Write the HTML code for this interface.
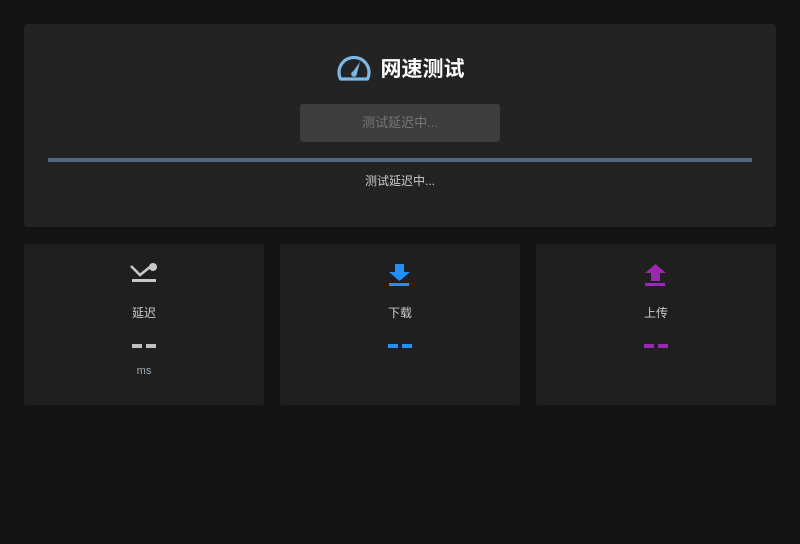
<!DOCTYPE html>
<html><head><meta charset="utf-8"><style>
*{margin:0;padding:0;box-sizing:border-box}
body{width:800px;height:544px;background:#141414;font-family:"Liberation Sans","Noto Sans CJK SC",sans-serif;position:relative;overflow:hidden}
.top{position:absolute;left:24px;top:24px;width:752px;height:203px;background:#232323;border-radius:4px}
.title{position:absolute;left:0;right:0;top:29px;color:#fff;font-size:21px;font-weight:bold;display:flex;justify-content:center;align-items:center;gap:9px}
.btn{position:absolute;left:300px;top:104px;width:200px;height:38px;background:#3d3d3d;border-radius:3px;color:#777;font-size:13px;text-align:center;line-height:38px}
.bar{position:absolute;left:48px;top:158px;width:704px;height:4px;background:#4c6882}
.st{position:absolute;left:0;right:0;top:172px;text-align:center;color:#ccc;font-size:12px}
.card{position:absolute;top:244px;width:240px;height:161px;background:#1f1f1f;border-radius:3px;text-align:center}
.card svg{position:absolute;left:106px;top:19px}
.lbl{position:absolute;left:0;right:0;top:60px;font-size:12px;color:#ccc}
.dash{position:absolute;left:108px;top:100px;width:24px;height:4px}
.dash:before,.dash:after{content:"";position:absolute;top:0;width:10px;height:4px;background:currentColor}
.dash:before{left:0}.dash:after{right:0}
.ms{position:absolute;left:0;right:0;top:121px;font-size:11px;color:#9ab}
</style></head><body>
<div class="top">
<div class="title"><svg width="36" height="28" viewBox="0 0 36 28"><path d="M4.5 25A15 15 0 1 1 31.5 25Z" fill="none" stroke="#7ab8e8" stroke-width="3.2" stroke-linejoin="round"/><path d="M16 19L24 8L20.5 21Z" fill="#7ab8e8"/><circle cx="18" cy="20" r="2.8" fill="#7ab8e8"/></svg><span>网速测试</span></div>
</div>
<div class="btn">测试延迟中...</div>
<div class="bar"></div>
<div class="st">测试延迟中...</div>
<div class="card" style="left:24px"><svg width="30" height="24" viewBox="0 0 30 24"><path d="M1 3L10 12L20 4" fill="none" stroke="#c8c8c8" stroke-width="2.6"/><circle cx="23" cy="4" r="4" fill="#c8c8c8"/><rect x="2" y="16" width="24" height="3" fill="#c8c8c8"/></svg><div class="lbl">延迟</div><div class="dash" style="color:#c0c0c0"></div><div class="ms">ms</div></div>
<div class="card" style="left:280px"><svg width="28" height="24" viewBox="0 0 28 24"><path d="M9 1H18V9H24L13.5 18L3 9H9Z" fill="#1e90ff"/><rect x="3" y="20" width="20" height="3" fill="#1e90ff"/></svg><div class="lbl">下载</div><div class="dash" style="color:#1e90ff"></div></div>
<div class="card" style="left:536px"><svg width="28" height="24" viewBox="0 0 28 24"><path d="M13.5 1L24 10H18V18H9V10H3Z" fill="#9c27b0"/><rect x="3" y="20" width="20" height="3" fill="#9c27b0"/></svg><div class="lbl">上传</div><div class="dash" style="color:#9c27b0"></div></div>
</body></html>
